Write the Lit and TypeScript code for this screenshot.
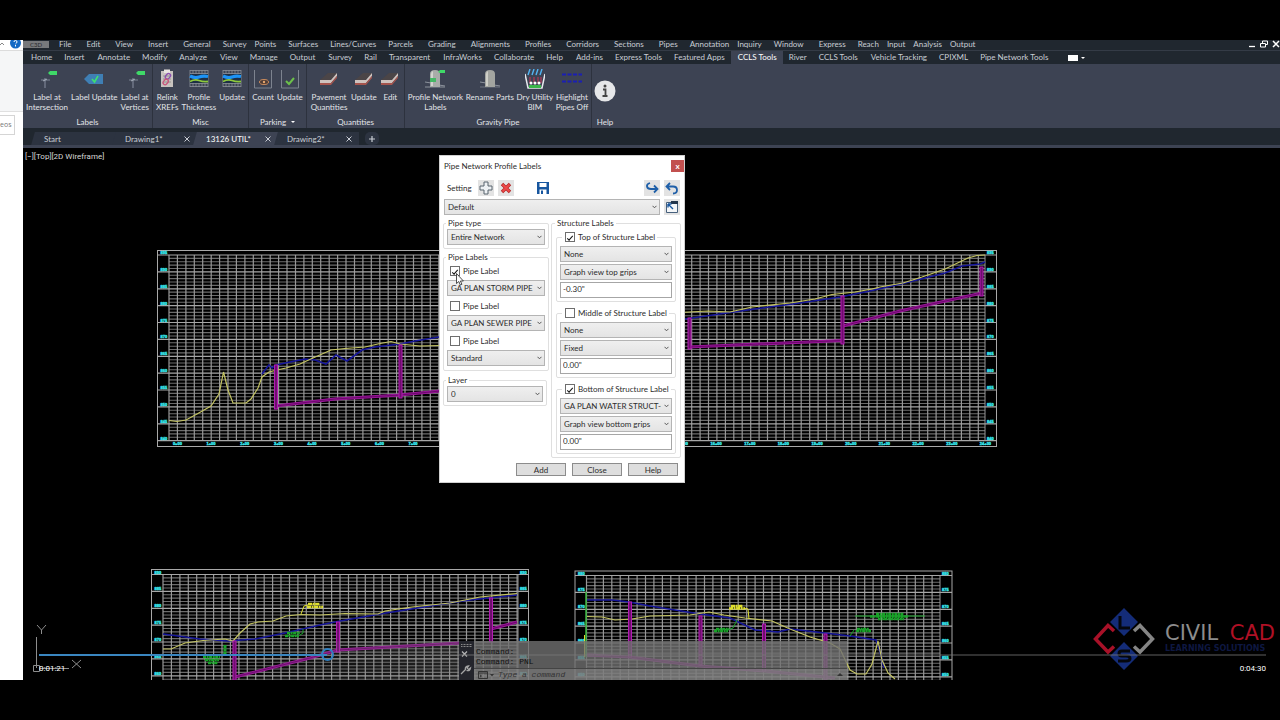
import { LitElement, html, css, svg } from "lit";
import { customElement } from "lit/decorators.js";

type Pt = [number, number];
const path = (pts: Pt[]) => pts.map((p) => p.join(",")).join(" ");

/* ---------- menu and ribbon data ---------- */

const MENU: [string, string][] = [
  ["File", "l"], ["Edit", "l"], ["View", "l"], ["Insert", "l"], ["General", "m"], ["Survey", "s"],
  ["Points", "m"], ["Surfaces", "m"], ["Lines/Curves", "m"], ["Parcels", "l"], ["Grading", "l"],
  ["Alignments", "l"], ["Profiles", "l"], ["Corridors", "l"], ["Sections", "l"], ["Pipes", "m"],
  ["Annotation", "s"], ["Inquiry", "m"], ["Window", "l"], ["Express", "m"], ["Reach", "s"],
  ["Input", "s"], ["Analysis", "s"], ["Output", "s"],
];

const TABS = [
  "Home", "Insert", "Annotate", "Modify", "Analyze", "View", "Manage", "Output", "Survey", "Rail",
  "Transparent", "InfraWorks", "Collaborate", "Help", "Add-ins", "Express Tools", "Featured Apps",
  "CCLS Tools", "River", "CCLS Tools", "Vehicle Tracking", "CPIXML", "Pipe Network Tools",
];

const icons: Record<string, unknown> = {
  labelAt: svg`<path d="M8 9v10M4 11h9" stroke="#7c8494" stroke-width="1.2"/><path d="M6 12l4-2" stroke="#b9c0cc" stroke-width=".8"/><path d="M11 4l2-2h7v4h-7z" fill="#3fd968"/>`,
  labelUpdate: svg`<path d="M0 10l5-5h14v10H5z" fill="#3f7fb4"/><path d="M8 10l2.500 3L14 7" stroke="#3fe070" stroke-width="1.600" fill="none"/>`,
  relink: svg`<rect x="4" y="2" width="12" height="16" fill="#c8c3bf"/><rect x="7" y="0.500" width="6" height="3.500" fill="#e9e4e0"/><path d="M6 7h8M6 10h8M6 13h8" stroke="#8a8583" stroke-width=".8"/><rect x="8.500" y="5.500" width="6" height="4" rx="2" transform="rotate(-50 11 8)" fill="none" stroke="#8a4fb0" stroke-width="1.300"/><rect x="5.500" y="11.500" width="6" height="4" rx="2" transform="rotate(-50 8 13)" fill="none" stroke="#c9557c" stroke-width="1.300"/>`,
  thickness: svg`<path d="M1 1v17M4 1v17M7 1v17M10 1v17M13 1v17M16 1v17M19 1v17M1 1.500h18M1 4.500h18M1 14.500h18M1 17.500h18" stroke="#8b8f98" stroke-width=".8"/><path d="M1 5h18v9H1z" fill="#1d2f45"/><path d="M1 7q5 2.500 9 1t9-.5" fill="none" stroke="#1d93f5" stroke-width="3.200"/><path d="M1 12.500Q6 10 10 11.500T19 12.500" fill="none" stroke="#8fc93c" stroke-width="1.800"/>`,
  count: svg`<path d="M1.500 1v18h17V1" stroke="#7d838f" fill="none"/><ellipse cx="11" cy="13" rx="4.500" ry="2.500" fill="#4f3c35" stroke="#c98a5c"/><circle cx="11" cy="13" r="1.200" fill="#e3a56f"/>`,
  check: svg`<path d="M1.500 1v18h17V1" stroke="#7d838f" fill="none"/><path d="M6 12l3 3 5-6" stroke="#6cc04a" stroke-width="2" fill="none"/>`,
  slab: svg`<path d="M1 11L9 4h9l-6 7z" fill="#4b4547"/><path d="M1 11h11l6-7v3l-6 7H1z" fill="#cfc3be"/><path d="M1 14h11l6-7v2l-6 7H1z" fill="#a5544d"/>`,
  manholeLabel: svg`<path d="M0 13l6 1M14 16l6 1M0 18h20" stroke="#8d939c"/><path d="M5 18V5Q5 1 10 1Q15 1 15 5V18z" fill="#a9aca9"/><path d="M6 17V5q0-2 2-3v15z" fill="#d2d4cf"/><path d="M5 9h6v4H5z" fill="#45b865"/><path d="M13 3l2-2h5v3h-5z" fill="#3fd968"/>`,
  manhole: svg`<path d="M0 13l6 1M14 16l6 1" stroke="#8d939c"/><path d="M0 18h20" stroke="#6f7580"/><path d="M5 18V5Q5 1 10 1Q15 1 15 5V18z" fill="#a3a5a0"/><path d="M6 17V5q0-2 2-3v15z" fill="#cfcfc8"/>`,
  dry: svg`<path d="M0 5l3 14h14l3-14" stroke="#e8eaee" stroke-width="1.500" fill="none"/><path d="M3 6l2-6M7 6l2-6M11 6l2-6M15 6l2-6" stroke="#52b4f2" stroke-width="1.400"/><path d="M5 8v6M9 8v6M13 8v6M16 8v6" stroke="#a33a58" stroke-width="1.400"/><circle cx="6" cy="14" r="1.500" fill="#fff"/><circle cx="10" cy="14" r="1.500" fill="#fff"/><circle cx="14" cy="14" r="1.500" fill="#fff"/><path d="M4 16h12v3H4z" fill="#3bb54a"/>`,
  pipes: svg`<path d="M0 5.500h20M0 12.500h20" stroke="#1b1fb4" stroke-width="1.800" stroke-dasharray="4 1.500"/>`,
};
const icon = (name: string) => html`<svg class="ico" viewBox="0 0 20 20" aria-hidden="true">${icons[name]}</svg>`;

const PANELS: { title: string; cls: string; more?: boolean; tools: [string, string, string?][] }[] = [
  { title: "Labels", cls: "p130", tools: [["labelAt", "Label at", "Intersection"], ["labelUpdate", "Label Update"], ["labelAt", "Label at", "Vertices"]] },
  { title: "Misc", cls: "p96", tools: [["relink", "Relink", "XREFs"], ["thickness", "Profile", "Thickness"], ["thickness", "Update"]] },
  { title: "Parking", cls: "p58", more: true, tools: [["count", "Count"], ["check", "Update"]] },
  { title: "Quantities", cls: "p98", tools: [["slab", "Pavement", "Quantities"], ["slab", "Update"], ["slab", "Edit"]] },
  { title: "Gravity Pipe", cls: "p187", tools: [["manholeLabel", "Profile Network", "Labels"], ["manhole", "Rename Parts"], ["dry", "Dry Utility", "BIM"], ["pipes", "Highlight", "Pipes Off"]] },
];

@customElement("cad-ribbon")
class CadRibbon extends LitElement {
  static styles = css`
    :host { display: block; color: #c9cdd4; font: 8px/10px Lato, sans-serif; background: #20272f; }
    ul { list-style: none; margin: 0; padding: 0; }
    a { color: inherit; text-decoration: none; white-space: nowrap; }
    button { font: inherit; color: inherit; background: none; border: 0; padding: 0; }
    .menu { display: flex; align-items: flex-start; height: 11px; overflow: hidden; border-bottom: 1px solid #343b46; box-sizing: border-box; }
    .brand { width: 26px; height: 7px; margin: 1px 10px 0 0; background: #77797c; color: #26282c; font-size: 6px; line-height: 6px; }
    .menu ul { display: flex; margin-top: -1px; }
    .l { margin-right: 15px; }
    .m { margin-right: 12px; }
    .s { margin-right: 8px; }
    .wins { margin-left: auto; display: flex; gap: 4px; }
    .wins svg { width: 8px; height: 8px; display: block; }
    .tabs { display: flex; height: 13px; align-items: stretch; }
    .tabs .list { padding-left: 2px; }
    .tabs li { padding: 0 6px; line-height: 13px; }
    .tabs li:nth-child(3n) { padding-left: 7px; }
    .tabs .on { background: #3d4353; color: #fff; }
    .extra { display: flex; align-items: center; gap: 3px; margin-left: 14px; }
    .extra i { width: 10px; height: 6px; background: #fff; }
    .tri { width: 0; height: 0; border: 2px solid transparent; border-top-color: #fff; border-bottom: 0; }
    .ribbon { display: flex; background: #3d4353; height: 64px; color: #e2e4e8; }
    .panel { display: flex; flex-direction: column; box-sizing: border-box; border-right: 1px solid #2d323e; padding-top: 5px; }
    .p130 { width: 130px; } .p96 { width: 96px; } .p58 { width: 58px; } .p98 { width: 98px; } .p187 { width: 187px; }
    .tools { display: flex; justify-content: space-evenly; flex: 1; }
    .tool { display: flex; flex-direction: column; align-items: center; justify-content: flex-start; white-space: nowrap; }
    .ico { width: 20px; height: 20px; margin-bottom: 3px; flex: none; }
    .title { display: flex; justify-content: center; align-items: center; gap: 5px; height: 12px; }
    .help { display: flex; flex-direction: column; align-items: center; justify-content: space-between; width: 26px; padding-top: 16px; }
    .help svg { width: 22px; height: 22px; display: block; }
    .docs { display: flex; height: 20px; padding: 4px 0 0 12px; box-sizing: border-box; border-bottom: 3px solid #3d4353; }
    .doc { position: relative; width: 81px; height: 13px; box-sizing: border-box; padding: 0 7px 0 9px; display: flex; justify-content: space-between; align-items: center; background: #2c3340; z-index: 0; }
    .doc::before { content: ""; position: absolute; z-index: -1; left: -2px; top: 0; bottom: 0; width: 8px; background: inherit; transform: skewX(-16deg); }
    .doc.on { background: #3d4353; color: #fff; }
    .doc svg, .plus svg { width: 6px; height: 6px; display: block; }
    .plus { width: 14px; display: grid; place-items: center; margin-left: 6px; background: #2c3340; border-radius: 5px; }
  `;
  render() {
    const docs: [string, boolean][] = [["Start", false], ["Drawing1*", false], ["13126 UTIL*", true], ["Drawing2*", false]];
    return html`
      <nav class="menu" aria-label="Menu bar">
        <button class="brand">C3D</button>
        <ul>${MENU.map(([t, g]) => html`<li class=${g}><a href="#">${t}</a></li>`)}</ul>
        <div class="wins">
          <svg viewBox="0 0 8 8"><path d="M1 6.500h6" stroke="#fff" stroke-width="1.300"/></svg>
          <svg viewBox="0 0 8 8"><path d="M.5 3.500h5v3.500h-5zM2.500 3V1h5v3.500H6" stroke="#fff" fill="none"/></svg>
          <svg viewBox="0 0 8 8"><path d="M1 1l6 6M7 1L1 7" stroke="#fff" stroke-width="1.500"/></svg>
        </div>
      </nav>
      <nav class="tabs" aria-label="Ribbon tabs">
        <ul class="tabs list">${TABS.map((t, i) => html`<li class=${i === 17 ? "on" : ""}><a href="#">${t}</a></li>`)}</ul>
        <span class="extra"><i></i><span class="tri"></span></span>
      </nav>
      <div class="ribbon">
        ${PANELS.map((p) => html`
          <section class="panel ${p.cls}">
            <div class="tools">
              ${p.tools.map(([ic, a, b]) => html`<button class="tool">${icon(ic)}<span>${a}</span>${b ? html`<span>${b}</span>` : ""}</button>`)}
            </div>
            <div class="title">${p.title}${p.more ? html`<span class="tri"></span>` : ""}</div>
          </section>`)}
        <section class="help">
          <svg viewBox="0 0 22 22"><circle cx="11" cy="11" r="10.500" fill="#e6e7e9"/><circle cx="11" cy="6" r="1.500" fill="#444"/><path d="M9 9.500h2.500v6M8.500 16h5" stroke="#444" stroke-width="1.800" fill="none"/></svg>
          <div class="title">Help</div>
        </section>
      </div>
      <div class="docs">
        ${docs.map(([t, on]) => html`
          <div class="doc ${on ? "on" : ""}"><span>${t}</span>
            ${t === "Start" ? "" : html`<button aria-label="Close ${t}"><svg viewBox="0 0 6 6"><path d="M.5.5l5 5M5.500.5l-5 5" stroke="#c9cdd4"/></svg></button>`}
          </div>`)}
        <button class="plus" aria-label="New drawing"><svg viewBox="0 0 6 6"><path d="M3 0v6M0 3h6" stroke="#c9cdd4" stroke-width="1.200"/></svg></button>
      </div>`;
  }
}

/* ---------- drawing area ---------- */

interface Chart {
  outer: [number, number, number, number];
  grid: [number, number, number, number];
  top: number;
  stations?: boolean;
}
const STEP = 8.43;
const MAJOR = 16.88;

const chart = (c: Chart) => {
  const [ox, oy, ox2, oy2] = c.outer;
  const [gx, gy, gx2, gy2] = c.grid;
  let minor = "", major = "", vert = "";
  for (let i = 0; gy + (i * MAJOR) / 5 <= gy2 + 0.5; i++) {
    const y = (gy + (i * MAJOR) / 5).toFixed(1);
    if (i % 5) minor += `M${gx} ${y}H${gx2}`;
    else major += `M${ox} ${y}H${ox2}`;
  }
  for (let x = gx; x <= gx2 + 0.5; x += STEP) vert += `M${x.toFixed(1)} ${gy}V${gy2}`;
  const rows = Math.floor((gy2 - gy) / MAJOR + 0.1) + 1;
  const labels = Array.from({ length: rows }, (_, i) => i);
  return svg`
    <path d=${minor} stroke="#6c6c6c" stroke-width="1.100"/>
    <path d=${vert} stroke="#989898" stroke-width="1.200"/>
    <path d=${major} stroke="#a6a6a6" stroke-width="1.200"/>
    <rect x=${ox} y=${oy} width=${ox2 - ox} height=${oy2 - oy} fill="none" stroke="#a8a8a8"/>
    <path d=${`M${gx2} ${gy}V${gy2}`} stroke="#989898"/>
    ${labels.map((i) => svg`
      <text class="ax" x=${ox + 3} y=${gy + i * MAJOR - 1}>${c.top - i * 5}</text>
      <text class="ax" x=${gx2 + 2} y=${gy + i * MAJOR - 1}>${c.top - i * 5}</text>`)}
    ${c.stations ? Array.from({ length: 25 }, (_, i) => svg`<text class="ax" text-anchor="middle" x=${177.4 + i * 33.67} y="445">${i}+00</text>`) : ""}`;
};

const YELLOW: Pt[][] = [
  [[169, 420.5], [177, 421.5], [186, 420], [197, 414], [211, 406], [219, 394], [223.5, 372], [228, 390], [233, 403], [246, 403], [251, 399], [258, 388], [262, 377], [269, 372], [277, 370], [286, 368], [300, 364], [313, 358], [331, 350], [345, 348.5], [365, 347], [380, 343.5], [391, 341.5], [400, 344], [420, 346], [440, 345.5]],
  [[680, 312.5], [708, 311], [730, 312], [752, 307], [790, 303], [815, 299], [832, 294.5], [855, 292], [872, 289], [880, 287], [903, 283], [922, 277], [945, 269], [968, 258], [977, 255.5], [985, 255]],
  [[163, 649], [171, 649], [185, 643], [203, 640.5], [225, 639], [233, 641], [240, 633], [250, 624], [258, 622], [273, 621], [286, 616], [301, 614.5], [320, 615], [345, 613.5], [378, 614], [385, 611], [412, 607], [450, 603], [480, 597], [517, 593.5]],
  [[587, 616.5], [602, 617], [615, 620], [632, 619], [650, 616], [690, 615], [709, 612], [724, 615], [745, 618], [772, 621], [790, 629], [810, 637], [830, 643], [840, 649], [850, 670], [857, 674], [866, 674], [872, 664], [878, 641], [882, 660], [888, 673], [895, 679]],
];
const BLUE: Pt[][] = [
  [[262, 374], [269, 365], [272, 368], [276, 365], [290, 362], [305, 359], [315, 360], [326, 364], [336, 355], [347, 361], [362, 350], [375, 347], [400, 344], [415, 341], [439, 337]],
  [[685, 319], [720, 314], [755, 309], [800, 303], [840, 297], [870, 291], [905, 283], [945, 273], [962, 266], [980, 264], [985, 262]],
  [[163, 634], [200, 639], [228, 641], [255, 639], [285, 633], [320, 625], [340, 621], [380, 614], [430, 606], [470, 600], [517, 595]],
  [[587, 600], [612, 600], [629, 602], [650, 606], [700, 614], [730, 618], [755, 630], [778, 632], [790, 629], [825, 633], [850, 636], [876, 640], [881, 655], [884, 668]],
];
const PIPES: Pt[][] = [
  [[276, 406], [335, 399], [400, 395], [440, 391]],
  [[689, 347], [843, 340.5]],
  [[843, 326], [900, 311], [982, 293]],
  [[235, 677], [310, 658], [338, 650], [460, 643]],
  [[491, 629], [517, 622]],
  [[587, 655], [629, 657], [700, 666], [765, 671], [835, 678]],
];
const SHAFTS: [number, number, number][] = [
  [276, 365, 409], [400.5, 345, 398], [689.5, 318, 349], [842.5, 296, 344], [981.5, 267, 296],
  [234.5, 641, 680], [338, 622, 652], [491, 598, 642], [630, 602, 657], [700.5, 616, 665], [764, 624, 671], [825.5, 634, 680],
];

@customElement("cad-drawing")
class CadDrawing extends LitElement {
  static styles = css`
    :host { display: block; }
    svg { display: block; width: 100%; height: 100%; }
    .ax { font: bold 4px "Liberation Sans", sans-serif; fill: #35e0e6; stroke: #35e0e6; stroke-width: .4px; }
    .ucs { stroke: #8d8d8d; fill: none; }
  `;
  render() {
    return html`<svg viewBox="23 148 1257 532" preserveAspectRatio="xMinYMin slice" role="img" aria-label="Pipe network profile views">
      ${chart({ outer: [157.5, 250.5, 996.5, 446.5], grid: [169, 255, 985, 441], top: 895, stations: true })}
      ${chart({ outer: [151.5, 569.5, 528.5, 690], grid: [163, 574.5, 518, 690], top: 890 })}
      ${chart({ outer: [575, 571, 952, 690], grid: [586.5, 575.5, 940, 690], top: 880 })}
      <g fill="none" stroke="#16169a" stroke-width="1.600">${BLUE.map((p) => svg`<polyline points=${path(p)}/>`)}</g>
      <g fill="none" stroke="#c4c462" stroke-width="1.200">${YELLOW.map((p) => svg`<polyline points=${path(p)}/>`)}</g>
      <g fill="none" stroke="#9a149a" stroke-width="3">${PIPES.map((p) => svg`<polyline points=${path(p)}/>`)}</g>
      <g fill="none" stroke="#5c085c" stroke-width=".8">${PIPES.map((p) => svg`<polyline points=${path(p)}/>`)}</g>
      ${SHAFTS.map(([x, a, b]) => svg`<rect x=${x - 1.5} y=${a} width="3" height=${b - a} fill="#6d0f6d" stroke="#b31ab3"/>`)}
      <g fill="none" stroke="#dede2e">
        <path d="M301 614l3-8 4-1M744 608l4 1 1 10M584.500 635v22"/>
        <path d="M308 604h12M307 607h16M731 606h12M729 608.500h16" stroke-width="2.500" stroke-dasharray="4 .6 2 .5"/>
      </g>
      <g fill="none" stroke="#18a428">
        <path d="M586 592v65" stroke="#35b53a" stroke-width="1.500"/>
        <path d="M300 635l3-2v-4M728 630l5-2 4-8M850 636l4-6M855 616h70M220 656l5-3"/>
        <path d="M287 633h13M285 636h14M203 657h17M205 660h14M208 663h10M716 629h13M714 631h14M857 629h12M856 631h15M876 614h28M870 616.500h38M878 619h26" stroke-width="2.500" stroke-dasharray="3 .6 2 .5"/>
        <path d="M225 645v11" stroke-width="3" stroke-dasharray="3 .5"/>
      </g>
      <path class="ucs" d="M36.500 637v31M39 668.500h30M33.500 665.500h6v6h-6zM37 625l4.500 5 4.500-5M41.500 630v4M72 660l9 8M81 660l-9 8"/>
    </svg>`;
  }
}

/* ---------- dialog ---------- */

@customElement("label-dialog")
class LabelDialog extends LitElement {
  static styles = css`
    :host { display: block; box-sizing: border-box; background: #fff; border: 1px solid #d0d0d0; color: #2c2c2c; font: 8px/10px Lato, sans-serif; padding: 0 3px 6px; }
    button, select, input { font: inherit; color: inherit; box-sizing: border-box; margin: 0; border-radius: 0; }
    button { padding: 0; }
    header { display: flex; justify-content: space-between; align-items: center; height: 20px; padding-left: 1px; }
    h1 { font: inherit; margin: 0; }
    .x { width: 13px; height: 12px; margin-right: -3px; border: 0; background: #c2504f; color: #fff; font-weight: 700; line-height: 10px; }
    .bar { display: flex; align-items: center; height: 16px; padding: 0 1px 0 4px; margin-top: 4px; }
    .label { width: 27px; }
    .ib { width: 16px; height: 16px; border: 0; background: #e3e3e3; display: grid; place-items: center; margin-left: 4px; }
    .ib svg { width: 14px; height: 14px; display: block; }
    .ib.save { margin-left: 21px; background: #fff; }
    .ib.push { margin-left: auto; }
    .row { display: flex; margin: 3px 1px 0; }
    .sel { position: relative; display: block; flex: 1; min-width: 0; }
    .sel select { appearance: none; width: 100%; height: 16px; display: block; padding: 0 10px 1px 3px; background: linear-gradient(#efefef, #e4e4e4); border: 1px solid #b4b4b4; text-overflow: clip; overflow: hidden; }
    .sel svg { position: absolute; right: 3px; top: 6px; width: 5px; height: 4px; pointer-events: none; }
    .cols { display: grid; grid-template-columns: 106px 1fr; gap: 2px; margin-top: 3px; align-items: start; }
    fieldset { margin: 0; min-width: 0; border: 1px solid #dfdfdf; border-radius: 2px; padding: 1px 3px 3px; }
    legend { padding: 0 2px; height: 10px; margin-left: -1px; }
    .left { display: grid; gap: 3px; }
    .stack { display: grid; gap: 4px; padding-top: 3px; }
    .layer { margin-top: 1px; margin-right: 2px; }
    .outer { padding: 4px 4px 3px; }
    .inner { padding: 4px 3px 3px; }
    .inner + .inner { margin-top: 6px; }
    .inner legend { margin-left: 2px; }
    .fields { display: grid; gap: 2px; }
    .ck { display: flex; align-items: center; gap: 3px; height: 10px; padding-left: 3px; white-space: nowrap; }
    .inner .ck { padding-left: 1px; }
    .ck input { appearance: none; width: 10px; height: 10px; border: 1px solid #6e6e6e; background: #fff; display: grid; place-items: center; }
    .ck input:checked::before { content: ""; width: 5px; height: 2px; border: solid #111; border-width: 0 0 1px 1px; transform: rotate(-48deg); }
    .stack .ck + .sel { margin-bottom: 1px; }
    .txt { width: 100%; height: 16px; border: 1px solid #a6a6a6; background: #fff; padding: 0 2px 3px; outline: 0; }
    footer { display: flex; justify-content: flex-end; gap: 6px; margin-top: 5px; padding-right: 3px; }
    footer button { width: 50px; height: 13px; border: 1px solid #8c8c8c; background: #dedede; line-height: 10px; }
  `;
  sel(label: string, value: string) {
    return html`<label class="sel"><select aria-label=${label}><option>${value}</option></select>
      <svg viewBox="0 0 5 4"><path d="M.5.8l2 2 2-2" stroke="#555" fill="none"/></svg></label>`;
  }
  check(label: string, on: boolean) {
    return html`<label class="ck"><input type="checkbox" .checked=${on} />${label}</label>`;
  }
  group(title: string, on: boolean, a: string, b: string, v: string) {
    return html`<fieldset class="inner"><legend>${this.check(title, on)}</legend>
      <div class="fields">${this.sel(title + " style", a)}${this.sel(title + " position", b)}
      <input class="txt" aria-label="${title} offset" .value=${v} /></div></fieldset>`;
  }
  render() {
    return html`
      <header><h1>Pipe Network Profile Labels</h1><button class="x" aria-label="Close window">x</button></header>
      <div class="bar"><span class="label">Setting</span>
        <button class="ib" aria-label="Add setting"><svg viewBox="0 0 14 14"><path d="M5 1h4v4h4v4H9v4H5V9H1V5h4z" fill="#eef1f4" stroke="#58646f"/></svg></button>
        <button class="ib" aria-label="Delete setting"><svg viewBox="0 0 14 14"><path d="M3 3l8 8M11 3l-8 8" stroke="#b32626" stroke-width="3.400"/><path d="M3.500 3.500l7 7M10.500 3.500l-7 7" stroke="#ee4a4a" stroke-width="2"/></svg></button>
        <button class="ib save" aria-label="Save setting"><svg viewBox="0 0 14 14"><path d="M1 1h12v12H1z" fill="#17569f"/><path d="M3.500 2h7v4h-7zM3.500 8.500h7V13h-7z" fill="#fff"/><path d="M5 9.500h2V13H5z" fill="#17569f"/></svg></button>
        <button class="ib push" aria-label="Redo"><svg viewBox="0 0 14 14"><path d="M5 2Q1.500 3 2 5.500T6 8h6M9 4.500L12.500 8 9 11.500" fill="none" stroke="#1f5fa8" stroke-width="1.800"/></svg></button>
        <button class="ib" aria-label="Undo"><svg viewBox="0 0 14 14"><path d="M5 2L1.500 5.500 5 9M2 5.500h6q4 0 4 3.500t-4 3.500" fill="none" stroke="#1f5fa8" stroke-width="1.800"/></svg></button>
      </div>
      <div class="row">${this.sel("Setting", "Default")}
        <button class="ib" aria-label="Pick from drawing"><svg viewBox="0 0 14 14"><path d="M1.500 2.500h11v10h-11z" fill="#f4f6f8" stroke="#46607c"/><path d="M6 1h7v3H6z" fill="#23364c"/><path d="M3 4l5 5M3 4h3.500M3 4v3.500" stroke="#17569f" stroke-width="1.400"/></svg></button>
      </div>
      <div class="cols">
        <div class="left">
          <fieldset><legend>Pipe type</legend>${this.sel("Pipe type", "Entire Network")}</fieldset>
          <fieldset><legend>Pipe Labels</legend><div class="stack">
            ${this.check("Pipe Label", true)}${this.sel("Storm label style", "GA PLAN STORM PIPE (N)")}
            ${this.check("Pipe Label", false)}${this.sel("Sewer label style", "GA PLAN SEWER PIPE LABEL")}
            ${this.check("Pipe Label", false)}${this.sel("Third label style", "Standard")}</div></fieldset>
          <fieldset class="layer"><legend>Layer</legend>${this.sel("Layer", "0")}</fieldset>
        </div>
        <fieldset class="outer"><legend>Structure Labels</legend>
          ${this.group("Top of Structure Label", true, "None", "Graph view top grips", '-0.30"')}
          ${this.group("Middle of Structure Label", false, "None", "Fixed", '0.00"')}
          ${this.group("Bottom of Structure Label", true, "GA PLAN WATER STRUCT-GRATE", "Graph view bottom grips", '0.00"')}
        </fieldset>
      </div>
      <footer><button>Add</button><button>Close</button><button>Help</button></footer>`;
  }
}

/* ---------- page ---------- */

@customElement("app-root")
class AppRoot extends LitElement {
  static styles = css`
    :host { display: block; box-sizing: border-box; height: 100vh; min-height: 600px; padding: 40px 0; background: #000; overflow: hidden; font: 7px/10px "Open Sans", sans-serif; }
    .frame { display: grid; grid-template-columns: 23px 1fr; height: 100%; }
    .side { background: #fff; overflow: hidden; color: #777; }
    .top { display: flex; align-items: flex-start; justify-content: space-between; height: 11px; border-bottom: 1px solid #dcdcdc; padding: 0 2px 0 0; box-sizing: border-box; }
    .top svg { display: block; height: 9px; }
    .band { height: 60px; background: #f5f6f7; border-bottom: 1px solid #e0e0e0; }
    .find { width: 15px; height: 20px; margin-top: 3px; box-sizing: border-box; border: 1px solid #d5d5d5; border-left: 0; line-height: 18px; }
    .work { display: flex; flex-direction: column; min-width: 0; }
    .canvas { position: relative; flex: 1; min-height: 0; overflow: hidden; }
    cad-drawing { position: absolute; inset: 0; }
    .view { position: absolute; left: 2px; top: 4px; color: #d8d8d8; font: 8px/10px Roboto, sans-serif; }
    label-dialog { position: absolute; left: 416px; top: 7px; width: 246px; }
    .cursor { position: absolute; left: 433px; top: 125px; width: 8px; height: 13px; }
    .shade { position: absolute; left: 200px; width: 236px; bottom: 0; height: 39px; background: linear-gradient(90deg, transparent, rgba(120, 120, 120, .3)); }
    .cmd { position: absolute; left: 436px; bottom: 0; width: 388px; height: 39px; display: grid; grid-template-columns: 15px 1fr; font: 8px/10px "Liberation Mono", monospace; color: #101010; }
    .grip { background: #24252c; }
    .grip svg { width: 15px; height: 39px; display: block; }
    .log { background: rgba(112, 112, 112, .8); display: flex; flex-direction: column; }
    .lines { flex: 1; padding: 6px 2px 0; }
    .ask { display: flex; align-items: center; gap: 4px; height: 11px; padding: 0 4px; border-top: 1px solid #444; background: rgba(140, 140, 140, .4); }
    .ask svg { width: 16px; height: 8px; }
    .ask input { flex: 1; min-width: 0; border: 0; padding: 0; background: none; outline: 0; font: italic 8px/10px "Liberation Mono", monospace; }
    .ask input::placeholder { color: #333; opacity: 1; }
    .up { width: 0; border: 3px solid transparent; border-bottom-color: #333; border-top: 0; }
    .player { position: absolute; left: 16px; right: 14px; bottom: 6px; color: #fff; font: 8px/10px Roboto, sans-serif; }
    .player input { appearance: none; display: block; width: 100%; height: 13px; margin: 0 0 3px; background: linear-gradient(#3a86c0, #3a86c0) 0 6px / 23.500% 2px no-repeat, linear-gradient(rgba(120, 120, 120, .4), rgba(120, 120, 120, .4)) 0 6px / 100% 2px no-repeat; }
    .player input::-webkit-slider-thumb { appearance: none; width: 13px; height: 13px; border-radius: 50%; border: 2px solid #2f80c2; background: none; box-sizing: border-box; }
    .times { display: flex; justify-content: space-between; }
    .logo { position: absolute; right: 5px; bottom: 9px; display: flex; align-items: center; gap: 10px; }
    .logo svg { width: 62px; height: 64px; display: block; }
    .words { width: 110px; }
    .name { font: 21px/16px "DejaVu Sans", sans-serif; color: #8c8c8c; white-space: nowrap; display: flex; justify-content: space-between; }
    .name b { font-weight: 400; color: #b01025; }
    .tag { margin-top: 3px; font: bold 8px/9px "DejaVu Sans", sans-serif; color: #0e1842; white-space: nowrap; }
  `;
  render() {
    return html`<div class="frame">
      <aside class="side">
        <div class="top">
          <svg width="6" viewBox="0 0 6 9"><path d="M0 5l2-2 2 2" stroke="#888" fill="none"/></svg>
          <svg width="11" viewBox="0 0 11 9"><circle cx="5.500" cy="3" r="5.500" fill="#1469c4"/><path d="M4 2q0-1.500 1.500-1.500T7 2q0 .8-1.500 2M5.500 5v1.500" stroke="#fff" fill="none"/></svg>
        </div>
        <div class="band"></div>
        <div class="find">eos</div>
      </aside>
      <main class="work">
        <cad-ribbon></cad-ribbon>
        <div class="canvas">
          <cad-drawing></cad-drawing>
          <div class="view">[−][Top][2D Wireframe]</div>
          <div class="shade"></div>
          <div class="cmd">
            <div class="grip"><svg viewBox="0 0 15 39"><path d="M2 3.500h11M2 5.500h11" stroke="#888" stroke-dasharray="1 .5"/><path d="M3 10.500l5 5M8 10.500l-5 5" stroke="#b5b5b5" stroke-width="1.300"/><path d="M2 33l5-5M6.500 28.500q-1-3 3-3.500l-1.500 2 1.500 1.500 2-1.500q-.5 3.500-4 2.500" stroke="#a5a5a5" stroke-width="1.300" fill="none"/></svg></div>
            <div class="log">
              <div class="lines">Command:<br />Command: PNL</div>
              <div class="ask">
                <svg viewBox="0 0 16 8"><path d="M.5.5h9v7h-9zM.5 2h9M2 4l1.500 1L2 6" stroke="#333" fill="none"/><path d="M12 3h4l-2 2.500z" fill="#333"/></svg>
                <input aria-label="Command" placeholder="Type a command" /><span class="up"></span>
              </div>
            </div>
          </div>
          <label-dialog></label-dialog>
          <svg class="cursor" viewBox="0 0 8 13"><path d="M.5.5v10l2.300-2 1.500 3.500 1.600-.7-1.500-3.300h3z" fill="#fff" stroke="#222" stroke-width=".8"/></svg>
          <div class="logo">
            <svg viewBox="0 0 62 64">
              <path d="M31 1l14 14-14 14-14-14zM31 35l14 14-14 14-14-14z" fill="#142c78"/>
              <path d="M21 24l-6-5.500L2.500 32 15 45l6-5.500" fill="none" stroke="#a81128" stroke-width="3.500"/>
              <path d="M41 24l6-5.500L59.500 32 47 45l-6-5.500" fill="none" stroke="#858585" stroke-width="3.500"/>
              <path d="M27 9v12h10M37 44h-8q-3 0-3 2.500t3 2.500h4q4 0 4 2.500t-4 2.500h-8" fill="none" stroke="#05070d" stroke-width="3"/>
            </svg>
            <div class="words"><div class="name"><span>CIVIL</span><b>CAD</b></div><div class="tag">LEARNING SOLUTIONS</div></div>
          </div>
          <div class="player">
            <input type="range" aria-label="Seek" min="0" max="1000" .value=${"232"} />
            <div class="times"><span>0:01:21</span><span>0:04:30</span></div>
          </div>
        </div>
      </main>
    </div>`;
  }
}
